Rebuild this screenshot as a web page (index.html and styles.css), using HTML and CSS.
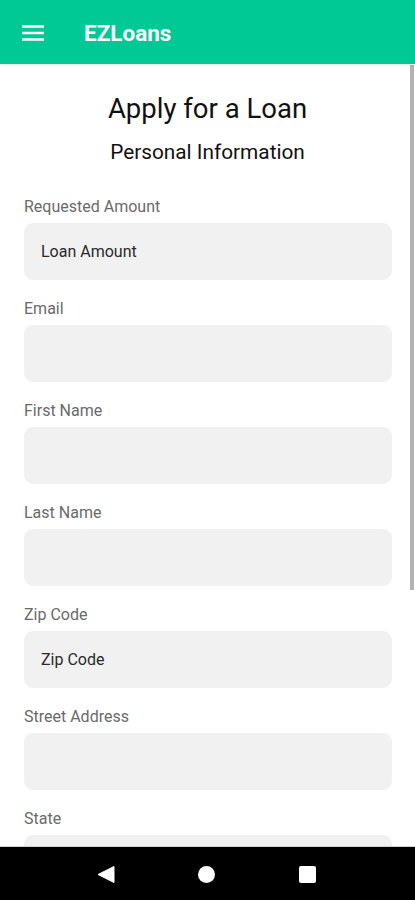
FILE: index.html
```html
<!DOCTYPE html>
<html lang="en">
<head>
<meta charset="utf-8">
<title>EZLoans</title>
<link rel="stylesheet" href="styles.css">
</head>
<body>
<div class="app">
  <header class="topbar">
    <svg class="menu" width="24" height="24" viewBox="0 0 24 24"><path d="M1 5.5h22M1 12h22M1 18.5h22" stroke="#fff" stroke-width="2.6" fill="none"/></svg>
    <span class="brand">EZLoans</span>
  </header>
  <main class="content">
    <h1 class="title">Apply for a Loan</h1>
    <h2 class="subtitle">Personal Information</h2>
    <form class="form">
      <label class="field"><span class="label">Requested Amount</span><span class="input">Loan Amount</span></label>
      <label class="field"><span class="label">Email</span><span class="input"></span></label>
      <label class="field"><span class="label">First Name</span><span class="input"></span></label>
      <label class="field"><span class="label">Last Name</span><span class="input"></span></label>
      <label class="field"><span class="label">Zip Code</span><span class="input">Zip Code</span></label>
      <label class="field"><span class="label">Street Address</span><span class="input"></span></label>
      <label class="field"><span class="label">State</span><span class="input"></span></label>
    </form>
    <div class="scrollthumb"></div>
  </main>
  <nav class="sysnav">
    <svg width="18" height="17" viewBox="0 0 18 17"><path d="M17 0.5V16.5L1 8.5Z" fill="#fff" stroke="#fff" stroke-linejoin="round" stroke-width="1"/></svg>
    <span class="home"></span>
    <span class="recent"></span>
  </nav>
</div>
</body>
</html>
```
FILE: styles.css
```css
* { box-sizing: border-box; }
html, body { margin: 0; padding: 0; }
body {
  font-family: Roboto, "Noto Sans", "Liberation Sans", sans-serif;
  background: #fff;
}
.app {
  height: 900px;
  display: flex;
  flex-direction: column;
}
.topbar {
  height: 64px;
  flex: none;
  background: #00c995;
  display: flex;
  align-items: center;
  padding-left: 21px;
  gap: 39px;
  box-shadow: 0 1px 2px rgba(0,0,0,0.12);
  position: relative;
  z-index: 1;
}
.menu { flex: none; margin-top: 2px; }
.brand {
  color: #fff;
  font-size: 22.5px;
  font-weight: 700;
  margin-top: 2px;
}
.content {
  flex: 1;
  overflow: hidden;
  position: relative;
  padding: 28px 0 40px;
}
.scrollthumb {
  position: absolute;
  top: 1px;
  right: 1px;
  width: 4px;
  height: 525px;
  background: #b3b3b3;
}
.title {
  margin: 0;
  text-align: center;
  font-size: 27.5px;
  line-height: 34px;
  font-weight: 400;
  color: #111;
}
.subtitle {
  margin: 13px 0 0;
  text-align: center;
  font-size: 20.8px;
  line-height: 27px;
  font-weight: 400;
  color: #111;
}
.form {
  margin-top: 31px;
  padding: 0 23px 0 24px;
  display: flex;
  flex-direction: column;
  gap: 19px;
}
.field {
  display: flex;
  flex-direction: column;
  gap: 6px;
}
.label {
  font-size: 16px;
  line-height: 20px;
  color: #6a6a6a;
}
.input {
  height: 57px;
  background: #f1f1f1;
  border-radius: 9px;
  display: flex;
  align-items: center;
  padding-left: 17px;
  font-size: 16px;
  color: #2a2a2a;
}
.sysnav {
  height: 54px;
  flex: none;
  background: #000;
  display: flex;
  align-items: center;
  padding-left: 97px;
  border-top: 1px solid #d0d0d0;
}
.sysnav svg { flex: none; margin-top: 2px; }
.home {
  width: 17px;
  height: 17px;
  border-radius: 50%;
  background: #fff;
  margin-left: 83px;
  margin-top: 2px;
}
.recent {
  width: 17px;
  height: 17px;
  border-radius: 2px;
  background: #fff;
  margin-left: 84px;
  margin-top: 2px;
}
```
